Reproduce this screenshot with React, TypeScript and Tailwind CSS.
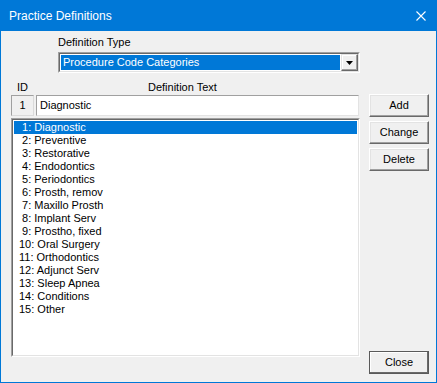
import React from "react";

const items = [
  " 1: Diagnostic",
  " 2: Preventive",
  " 3: Restorative",
  " 4: Endodontics",
  " 5: Periodontics",
  " 6: Prosth, remov",
  " 7: Maxillo Prosth",
  " 8: Implant Serv",
  " 9: Prostho, fixed",
  "10: Oral Surgery",
  "11: Orthodontics",
  "12: Adjunct Serv",
  "13: Sleep Apnea",
  "14: Conditions",
  "15: Other",
];

function Btn({ label, isDefault, className }: { label: string; isDefault?: boolean; className?: string }) {
  const base = "h-[23px] w-[60px] flex items-center justify-center bg-[#f0f0f0] text-[11px] leading-[13px] text-black ";
  const style = isDefault
    ? "border border-[#5a5a5a] shadow-[inset_-1px_-1px_0_#6a6a6a,inset_1px_1px_0_#ffffff] "
    : "border-t border-l border-white border-r border-b border-r-[#696969] border-b-[#696969] shadow-[inset_-1px_-1px_0_#a0a0a0,inset_1px_1px_0_#e3e3e3] ";
  return <div className={base + style + (className ?? "")}>{label}</div>;
}

export default function App() {
  return (
    <div className="w-[437px] h-[383px] bg-[#0078d7] flex flex-col font-['Liberation_Sans',Arial,sans-serif] select-none">
      {/* Title bar */}
      <div className="h-[31px] flex items-center pl-[9px] pr-[11px] text-white">
        <span className="text-[12px] leading-[16px] pt-[1px] flex-1">Practice Definitions</span>
        <svg width="10" height="10" viewBox="0 0 10 10" className="mt-[1px]">
          <path d="M0.5 0.5 L9.5 9.5 M9.5 0.5 L0.5 9.5" stroke="#ffffff" strokeWidth="1.1" />
        </svg>
      </div>

      {/* Body */}
      <div className="flex-1 mx-[1px] mb-[1px] bg-[#f0f0f0] flex flex-col pt-[5px] text-[11px] leading-[13px] text-black">
        <div className="h-[13px] pl-[57px]">Definition Type</div>

        {/* Combobox */}
        <div className="mt-[3px] ml-[57px] w-[302px] h-[21px] border-t border-l border-[#a0a0a0] border-r border-b border-r-white border-b-white">
          <div className="w-full h-full border-t border-l border-[#696969] border-r border-b border-r-[#e3e3e3] border-b-[#e3e3e3] bg-white flex">
            <div className="flex-1 p-[1px]">
              <div className="h-full bg-[#0078d7] text-white pl-[2px] flex items-center whitespace-nowrap">
                Procedure Code Categories
              </div>
            </div>
            <div className="w-[17px] h-full bg-[#f0f0f0] border-t border-l border-[#e3e3e3] border-r border-b border-r-[#696969] border-b-[#696969] shadow-[inset_-1px_-1px_0_#a0a0a0,inset_1px_1px_0_#ffffff] flex items-center justify-center">
              <svg width="7" height="4" viewBox="0 0 7 4">
                <polygon points="0,0 7,0 3.5,4" fill="#000000" />
              </svg>
            </div>
          </div>
        </div>

        {/* Labels row */}
        <div className="mt-[8px] h-[13px] flex pl-[10px]">
          <div className="w-[23px] text-center">ID</div>
          <div className="ml-[114px]">Definition Text</div>
        </div>

        {/* Main row */}
        <div className="h-[280px] flex pl-[10px]">
          <div className="w-[349px] flex flex-col">
            <div className="mt-[1px] h-[21px] flex">
              <div className="w-[23px] h-full border border-[#a0a0a0] border-r-[#dadada] border-b-[#dadada] bg-[#f0f0f0] flex items-center justify-center">
                1
              </div>
              <div className="ml-[2px] w-[323px] h-full border-t border-l border-[#a0a0a0] border-r border-b border-r-[#e3e3e3] border-b-[#e3e3e3] bg-white flex items-center pl-[3px]">
                Diagnostic
              </div>
            </div>

            {/* Listbox */}
            <div className="mt-[2px] h-[239px] border-t border-l border-[#a0a0a0] border-r border-b border-r-white border-b-white">
              <div className="w-full h-full border-t border-l border-[#696969] border-r border-b border-r-[#e3e3e3] border-b-[#e3e3e3] bg-white p-[1px]">
                {items.map((it, i) => (
                  <div
                    key={it}
                    className={
                      "h-[13px] pl-[5px] whitespace-pre " +
                      (i === 0 ? "bg-[#0078d7] text-white" : "text-black")
                    }
                  >
                    {it}
                  </div>
                ))}
              </div>
            </div>
          </div>

          {/* Buttons */}
          <div className="ml-[9px] w-[60px] flex flex-col">
            <Btn label="Add" />
            <Btn label="Change" className="mt-[4px]" />
            <Btn label="Delete" className="mt-[4px]" />
            <Btn label="Close" isDefault className="mt-auto" />
          </div>
        </div>
      </div>
    </div>
  );
}
